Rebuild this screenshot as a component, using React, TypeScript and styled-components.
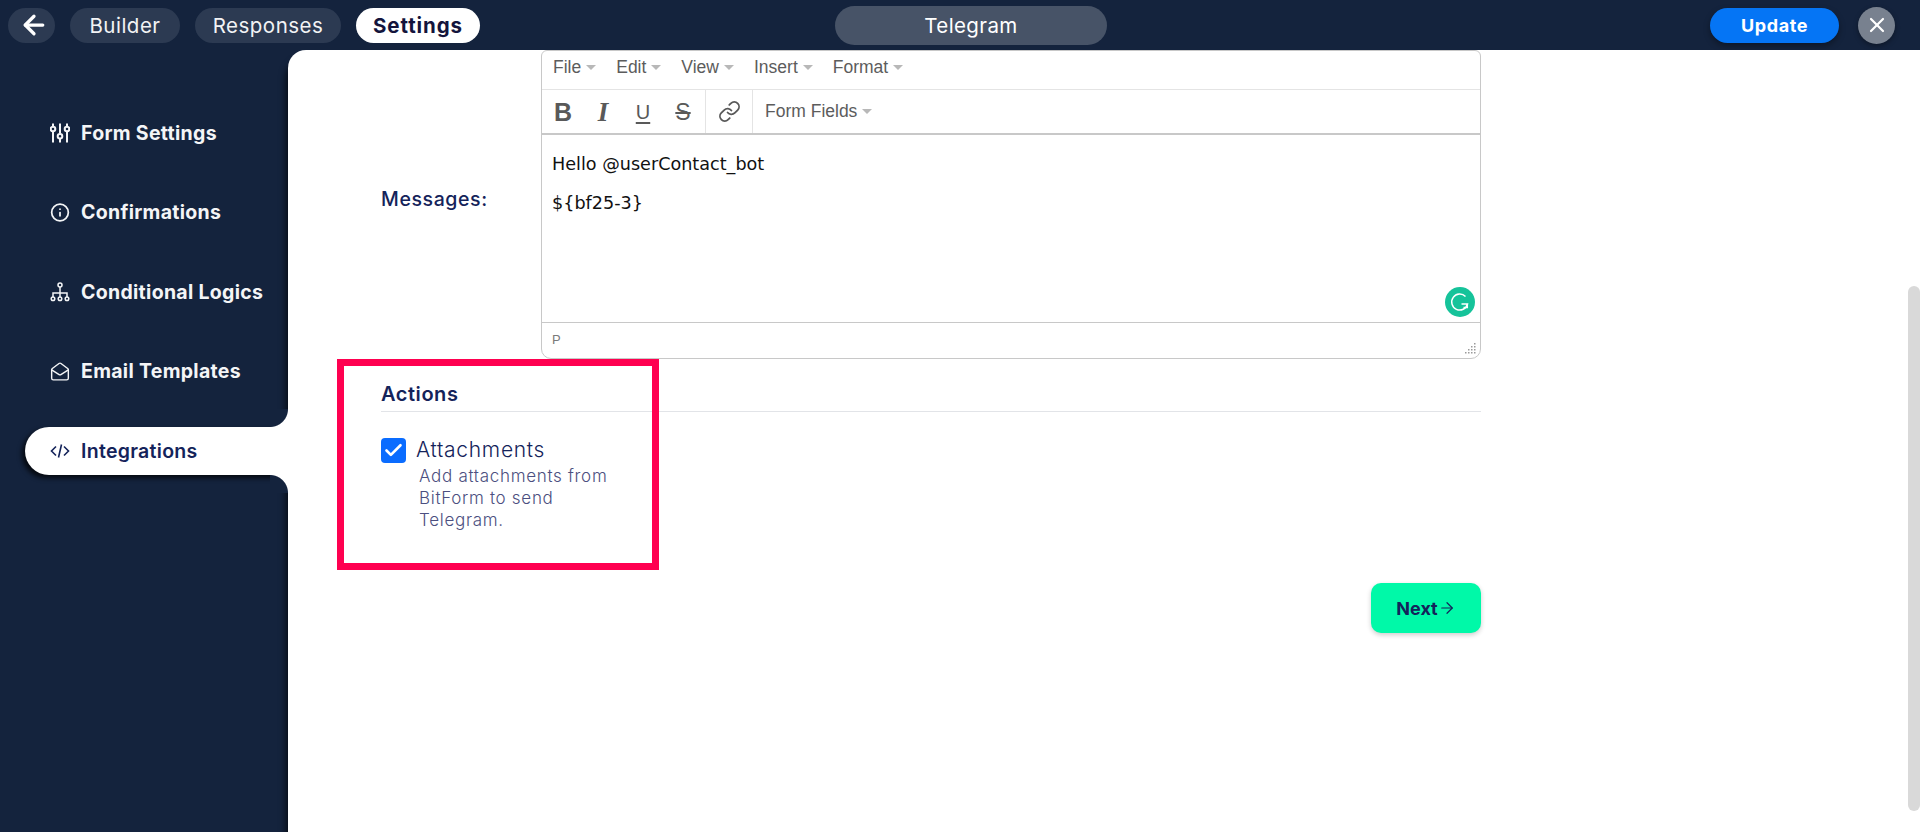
import React from 'react';
import styled, { createGlobalStyle } from 'styled-components';
import { ArrowLeft, X, Info, MailOpen, Link, ArrowRight, Check } from 'lucide-react';

const DARK = '#14233d';
const UI = 'Inter, "Noto Sans", sans-serif';

const Global = createGlobalStyle`
  html, body { margin: 0; padding: 0; background: #fff; }
  body { font-family: ${UI}; }
  * { box-sizing: border-box; }
`;

const Page = styled.div`
  width: 1920px;
  height: 832px;
  overflow: hidden;
  display: flex;
  flex-direction: column;
  background: ${DARK};
`;

const TopBar = styled.header`
  height: 50px;
  flex: none;
  display: grid;
  grid-template-columns: 827px 272px 1fr;
  align-items: center;
  padding: 0 25px 0 8px;
`;
const TopLeft = styled.nav`
  display: flex;
  align-items: center;
  gap: 15px;
`;
const BackButton = styled.button`
  width: 47px;
  height: 35px;
  border: 0;
  padding: 0 0 0 4px;
  border-radius: 18px;
  background: #2c3a52;
  color: #fff;
  display: flex;
  align-items: center;
  justify-content: center;
`;
const Tab = styled.button<{ $active?: boolean; $w: number }>`
  width: ${p => p.$w}px;
  height: 35px;
  border: 0;
  padding: 0;
  border-radius: 18px;
  font-family: ${UI};
  font-size: 20.5px;
  letter-spacing: ${p => (p.$active ? '0.9px' : '0.5px')};
  font-weight: ${p => (p.$active ? 700 : 400)};
  background: ${p => (p.$active ? '#fff' : '#2c3a52')};
  color: ${p => (p.$active ? '#14143c' : '#f2f3f5')};
`;
const TitlePill = styled.div`
  height: 39px;
  border-radius: 20px;
  background: #475367;
  color: #fff;
  font-size: 20.5px;
  letter-spacing: 0.4px;
  display: flex;
  align-items: center;
  justify-content: center;
`;
const TopRight = styled.div`
  display: flex;
  justify-content: flex-end;
  align-items: center;
  gap: 19px;
`;
const UpdateButton = styled.button`
  width: 129px;
  height: 35px;
  border: 0;
  border-radius: 18px;
  background: #0575f5;
  color: #fff;
  font-family: ${UI};
  font-size: 18px;
  letter-spacing: 0.6px;
  font-weight: 700;
  box-shadow: 0 3px 6px rgba(0, 0, 0, 0.35);
`;
const CloseButton = styled.button`
  width: 37px;
  height: 37px;
  border: 0;
  padding: 0;
  border-radius: 50%;
  background: #78818f;
  color: #fff;
  display: flex;
  align-items: center;
  justify-content: center;
  box-shadow: 0 2px 5px rgba(0, 0, 0, 0.35);
`;

const Body = styled.div`
  flex: 1;
  display: flex;
  min-height: 0;
`;
const Sidebar = styled.aside`
  width: 288px;
  flex: none;
  padding: 59px 0 0 25px;
  display: flex;
  flex-direction: column;
  gap: 31.4px;
`;
const NavItem = styled.a<{ $active?: boolean }>`
  position: relative;
  height: 48px;
  display: flex;
  align-items: center;
  gap: 11px;
  padding-left: 25px;
  font-size: 19.5px;
  font-weight: ${p => (p.$active ? 600 : 700)};
  letter-spacing: 0.3px;
  color: ${p => (p.$active ? '#14235a' : '#f4f5f7')};
  background: ${p => (p.$active ? '#fff' : 'transparent')};
  border-radius: 24px 0 0 24px;
  z-index: ${p => (p.$active ? 2 : 0)};
  box-shadow: ${p => (p.$active ? '-3px 3px 5px rgba(0,0,0,.75)' : 'none')};
  clip-path: ${p => (p.$active ? 'inset(-20px 0 -20px -10px)' : 'none')};
`;
const NotchTop = styled.span`
  position: absolute;
  right: 0;
  top: -18px;
  width: 18px;
  height: 18px;
  background: radial-gradient(circle at 0 0, ${DARK} 17.5px, #fff 18.5px);
`;
const NotchBottom = styled(NotchTop)`
  top: auto;
  bottom: -18px;
  background: radial-gradient(circle at 0 100%, ${DARK} 17.5px, #fff 18.5px);
`;
const IconBox = styled.span`
  width: 20px;
  height: 20px;
  flex: none;
  display: flex;
  align-items: center;
  justify-content: center;
`;

const Panel = styled.main`
  position: relative;
  flex: 1;
  background: #fff;
  border-top-left-radius: 18px;
  box-shadow: -2px 10px 7px rgba(0, 0, 0, 0.7);
  padding: 0 439px 0 93px;
  overflow: hidden;
`;
const MessageRow = styled.section`
  display: flex;
  align-items: flex-start;
`;
const FieldLabel = styled.label`
  width: 160px;
  flex: none;
  padding-top: 137px;
  font-size: 19.5px;
  letter-spacing: 0.6px;
  font-weight: 500;
  color: #14235a;
`;
const Editor = styled.div`
  flex: 1;
  height: 309px;
  border: 1px solid #c8c8c8;
  border-radius: 6px 6px 10px 10px;
  display: flex;
  flex-direction: column;
  font-family: 'Liberation Sans', Arial, sans-serif;
`;
const MenuBar = styled.div`
  height: 39px;
  flex: none;
  display: flex;
  align-items: center;
  gap: 20px;
  padding: 0 0 6px 11px;
  border-bottom: 1px solid #e4e4e4;
  font-size: 17.5px;
  color: #5c5c5c;
`;
const MenuEntry = styled.span`
  display: flex;
  align-items: center;
  gap: 5px;
`;
const Caret = styled.i`
  width: 0;
  height: 0;
  border-left: 5px solid transparent;
  border-right: 5px solid transparent;
  border-top: 5px solid #b8b8b8;
`;
const ToolBar = styled.div`
  height: 45px;
  flex: none;
  display: flex;
  align-items: stretch;
  border-bottom: 2px solid #c8c8c8;
  color: #595959;
`;
const ToolGroup = styled.div`
  display: flex;
  align-items: center;
  gap: 20px;
  padding: 0 12px 0 11px;
  border-right: 1px solid #e4e4e4;
`;
const LinkGroup = styled(ToolGroup)`
  width: 47px;
  padding: 0;
  justify-content: center;
`;
const Glyph = styled.span`
  width: 20px;
  text-align: center;
  font-family: 'Liberation Sans', Arial, sans-serif;
  font-size: 22px;
  line-height: 24px;
`;
const BoldGlyph = styled(Glyph)`
  font-weight: 700;
  font-size: 25px;
`;
const ItalicGlyph = styled(Glyph)`
  font-family: 'Liberation Serif', serif;
  font-weight: 700;
  font-style: italic;
  font-size: 27px;
`;
const UnderlineGlyph = styled(Glyph)`
  text-decoration: underline;
  text-decoration-thickness: 2px;
  text-underline-offset: 3px;
  font-size: 20px;
`;
const StrikeGlyph = styled(Glyph)`
  text-decoration: line-through;
  text-decoration-thickness: 1.5px;
  font-size: 23px;
  padding: 0 2px;
`;
const FieldsMenu = styled(MenuEntry)`
  padding-left: 12px;
  font-size: 17.5px;
  color: #5c5c5c;
`;
const Content = styled.div`
  position: relative;
  flex: 1;
  padding: 19px 10px 0;
  font-family: 'DejaVu Sans', Verdana, sans-serif;
  font-size: 17.6px;
  color: #111;
  border-bottom: 1px solid #c8c8c8;
`;
const Para = styled.p`
  margin: 0 0 18px;
  line-height: 21px;
`;
const GrammarlyBadge = styled.svg`
  position: absolute;
  right: 5px;
  bottom: 5px;
`;
const StatusBar = styled.div`
  position: relative;
  height: 35px;
  flex: none;
  padding: 9px 10px;
  font-size: 13px;
  color: #7a7a7a;
`;
const Grip = styled.svg`
  position: absolute;
  right: 4px;
  bottom: 4px;
`;

const ActionsHeading = styled.h3`
  margin: 23px 0 0;
  padding-bottom: 5px;
  font-size: 20px;
  letter-spacing: 0.55px;
  line-height: 24px;
  font-weight: 600;
  color: #14235a;
  border-bottom: 1px solid #e2e4e8;
`;
const CheckRow = styled.div`
  height: 25px;
  margin: 26px 0 0;
  display: flex;
  align-items: center;
  gap: 10px;
`;
const CheckBox = styled.span`
  width: 25px;
  height: 25px;
  border-radius: 4px;
  background: #0a6cff;
  color: #fff;
  display: flex;
  align-items: center;
  justify-content: center;
`;
const CheckLabel = styled.span`
  padding-bottom: 2px;
  font-size: 21px;
  font-weight: 300;
  letter-spacing: 0.7px;
  line-height: 25px;
  color: #14235a;
`;
const Description = styled.p`
  margin: 2px 0 0 38px;
  width: 210px;
  font-size: 17px;
  font-weight: 300;
  letter-spacing: 0.7px;
  line-height: 22px;
  color: #4c4f80;
`;
const NextRow = styled.div`
  margin-top: 52px;
  display: flex;
  justify-content: flex-end;
`;
const NextButton = styled.button`
  width: 110px;
  height: 50px;
  border: 0;
  border-radius: 10px;
  background: #00f9a8;
  color: #14235a;
  font-family: ${UI};
  font-size: 18px;
  font-weight: 700;
  display: flex;
  align-items: center;
  justify-content: center;
  box-shadow: 0 2px 5px rgba(0, 0, 0, 0.2);
`;
const Highlight = styled.div`
  position: absolute;
  left: 49px;
  top: 309px;
  width: 322px;
  height: 211px;
  border: 7px solid #ff0050;
  pointer-events: none;
`;
const ScrollThumb = styled.div`
  position: absolute;
  right: 0;
  top: 236px;
  width: 12px;
  height: 525px;
  border-radius: 6px;
  background: #d9d9d9;
`;

const SlidersIcon = () => (
  <svg width="20" height="20" viewBox="0 0 20 20" fill="none" stroke="#f4f5f7" strokeWidth="2">
    <path d="M3 0.5v3M3 9v10.5M10 0.5v10M10 16v3.5M17 0.5v3M17 9v10.5" />
    <circle cx="3" cy="6" r="2.3" />
    <circle cx="10" cy="13.2" r="2.3" />
    <circle cx="17" cy="6" r="2.3" />
  </svg>
);
const TreeIcon = () => (
  <svg width="20" height="20" viewBox="0 0 20 20" fill="none" stroke="#f4f5f7" strokeWidth="1.5">
    <circle cx="10" cy="3" r="2" />
    <path d="M10 5v10M3 15v-4h14v4" />
    <circle cx="3" cy="16.8" r="1.8" />
    <circle cx="10" cy="16.8" r="1.8" />
    <circle cx="17" cy="16.8" r="1.8" />
  </svg>
);
const CodeIcon = () => (
  <svg width="20" height="20" viewBox="0 0 20 20" fill="none" stroke="#14235a" strokeWidth="1.6">
    <path d="M6 5.5 1.5 10 6 14.5M14 5.5l4.5 4.5L14 14.5M11.5 3.5l-3 13" />
  </svg>
);
const Grammarly = () => (
  <GrammarlyBadge width="30" height="30" viewBox="0 0 30 30">
    <circle cx="15" cy="15" r="15" fill="#15c39a" />
    <path d="M20.5 9.5A8 8 0 1 0 22.5 17H16.5" fill="none" stroke="#fff" strokeWidth="1.5" />
    <path d="M18.5 20.5h3.8v-3.5" fill="none" stroke="#fff" strokeWidth="1.5" />
  </GrammarlyBadge>
);
const ResizeGrip = () => (
  <Grip width="12" height="12" viewBox="0 0 12 12" fill="#9a9a9a">
    {[[10, 1], [10, 4], [7, 4], [10, 7], [7, 7], [4, 7], [10, 10], [7, 10], [4, 10], [1, 10]].map(([x, y]) => (
      <rect key={`${x}-${y}`} x={x} y={y} width="1.5" height="1.5" />
    ))}
  </Grip>
);

const menus = ['File', 'Edit', 'View', 'Insert', 'Format'];
const nav: { label: string; icon: React.ReactNode; active?: boolean }[] = [
  { label: 'Form Settings', icon: <SlidersIcon /> },
  { label: 'Confirmations', icon: <Info size={23} strokeWidth={2.1} /> },
  { label: 'Conditional Logics', icon: <TreeIcon /> },
  { label: 'Email Templates', icon: <MailOpen size={23} strokeWidth={1.7} /> },
  { label: 'Integrations', icon: <CodeIcon />, active: true },
];

export default function App() {
  return (
    <Page>
      <Global />
      <TopBar>
        <TopLeft>
          <BackButton aria-label="Back"><ArrowLeft size={30} strokeWidth={2.6} /></BackButton>
          <Tab $w={110}>Builder</Tab>
          <Tab $w={146}>Responses</Tab>
          <Tab $w={124} $active>Settings</Tab>
        </TopLeft>
        <TitlePill>Telegram</TitlePill>
        <TopRight>
          <UpdateButton>Update</UpdateButton>
          <CloseButton aria-label="Close"><X size={24} strokeWidth={2.2} /></CloseButton>
        </TopRight>
      </TopBar>
      <Body>
        <Sidebar>
          {nav.map(n => (
            <NavItem key={n.label} $active={n.active}>
              {n.active && <NotchTop />}
              <IconBox>{n.icon}</IconBox>
              {n.label}
              {n.active && <NotchBottom />}
            </NavItem>
          ))}
        </Sidebar>
        <Panel>
          <MessageRow>
            <FieldLabel>Messages:</FieldLabel>
            <Editor>
              <MenuBar>
                {menus.map(m => (
                  <MenuEntry key={m}>{m}<Caret /></MenuEntry>
                ))}
              </MenuBar>
              <ToolBar>
                <ToolGroup>
                  <BoldGlyph>B</BoldGlyph>
                  <ItalicGlyph>I</ItalicGlyph>
                  <UnderlineGlyph>U</UnderlineGlyph>
                  <StrikeGlyph>S</StrikeGlyph>
                </ToolGroup>
                <LinkGroup>
                  <Link size={23} strokeWidth={1.9} />
                </LinkGroup>
                <FieldsMenu>Form Fields<Caret /></FieldsMenu>
              </ToolBar>
              <Content>
                <Para>Hello @userContact_bot</Para>
                <Para>{'${bf25-3}'}</Para>
                <Grammarly />
              </Content>
              <StatusBar>P<ResizeGrip /></StatusBar>
            </Editor>
          </MessageRow>
          <ActionsHeading>Actions</ActionsHeading>
          <CheckRow>
            <CheckBox><Check size={21} strokeWidth={3} /></CheckBox>
            <CheckLabel>Attachments</CheckLabel>
          </CheckRow>
          <Description>Add attachments from BitForm to send Telegram.</Description>
          <NextRow>
            <NextButton>Next<ArrowRight size={18} strokeWidth={1.6} /></NextButton>
          </NextRow>
          <Highlight />
          <ScrollThumb />
        </Panel>
      </Body>
    </Page>
  );
}
